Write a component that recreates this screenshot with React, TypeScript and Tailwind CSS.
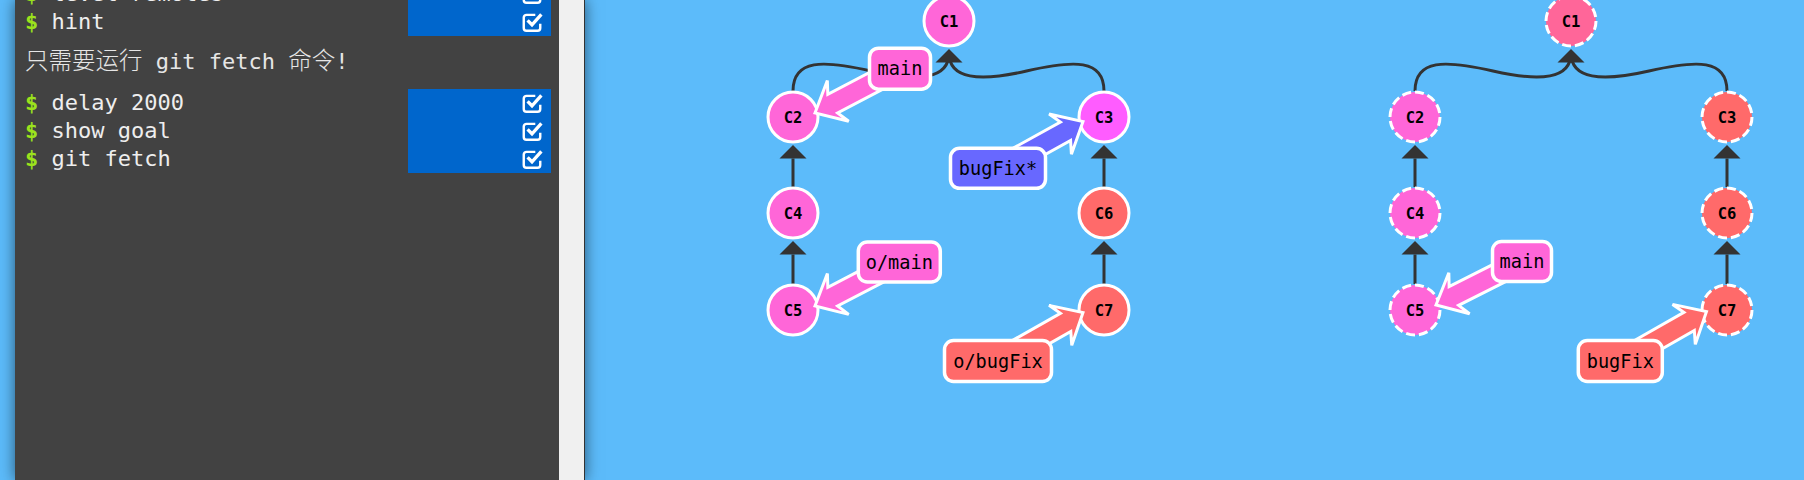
import React from "react";

const MONO = '"DejaVu Sans Mono", "Noto Sans CJK SC", monospace';

const PINK = "#ff66d8";
const MAGENTA = "#ff5cff";
const RED = "#ff6a6a";
const BLUE = "#6868ff";
const GOAL_C1 = "#ff6699";
const EDGE = "#333333";

function CheckIcon() {
  return (
    <svg width="22" height="22" viewBox="0 0 20 20" className="block">
      <path
        d="M13 3.5 H5 a2.5 2.5 0 0 0 -2.5 2.5 V15.5 a2.5 2.5 0 0 0 2.5 2.5 H15 a2.5 2.5 0 0 0 2.5 -2.5 V11.5"
        fill="none"
        stroke="#fff"
        strokeWidth="2.2"
      />
      <path d="M6 8.5 L10 12.5 L18.5 3" fill="none" stroke="#fff" strokeWidth="3" strokeLinejoin="miter" />
    </svg>
  );
}

function Row({ cmd }: { cmd: string }) {
  return (
    <div className="flex h-[28px] items-center">
      <div className="flex-1 whitespace-pre text-[#eeeeee]">
        <span className="font-bold text-[#9be21c]">$</span> {cmd}
      </div>
      <div className="flex h-full w-[143px] items-center justify-end bg-[#0066cc] pr-[8px]">
        <CheckIcon />
      </div>
    </div>
  );
}

type N = { id: string; x: number; y: number; color: string };

function Node({ n, dashed }: { n: N; dashed?: boolean }) {
  return (
    <g>
      <circle
        cx={n.x}
        cy={n.y}
        r={25}
        fill={n.color}
        stroke="#fff"
        strokeWidth={3}
        strokeDasharray={dashed ? "9 4" : undefined}
      />
      <text
        x={n.x}
        y={n.y + 5.5}
        textAnchor="middle"
        fontFamily={MONO}
        fontWeight="bold"
        fontSize={15.5}
        fill="#000"
      >
        {n.id}
      </text>
    </g>
  );
}

function VEdge({ x, childY, parentY }: { x: number; childY: number; parentY: number }) {
  const tip = parentY + 28;
  const base = tip + 13.5;
  return (
    <g>
      <line x1={x} y1={childY - 26} x2={x} y2={base} stroke={EDGE} strokeWidth={3} />
      <polygon points={`${x},${tip} ${x - 13.5},${base} ${x + 13.5},${base}`} fill={EDGE} />
    </g>
  );
}

function TopEdges({ lx, mx, rx, topY, rowY }: { lx: number; mx: number; rx: number; topY: number; rowY: number }) {
  const tip = topY + 28;
  const base = tip + 13.5;
  const sy = rowY - 26;
  const lm = (lx + mx) / 2;
  const rm = (rx + mx) / 2;
  const left = `M${lx} ${sy} C${lx} ${sy - 32}, ${lx + 30} ${sy - 31}, ${lm} ${sy - 20} C${mx - 30} ${sy - 9}, ${mx} ${sy - 12}, ${mx} ${tip + 4}`;
  const right = `M${rx} ${sy} C${rx} ${sy - 32}, ${rx - 30} ${sy - 31}, ${rm} ${sy - 20} C${mx + 30} ${sy - 9}, ${mx} ${sy - 12}, ${mx} ${tip + 4}`;
  return (
    <g>
      <path d={left} fill="none" stroke={EDGE} strokeWidth={3} />
      <path d={right} fill="none" stroke={EDGE} strokeWidth={3} />
      <polygon points={`${mx},${tip} ${mx - 13.5},${base} ${mx + 13.5},${base}`} fill={EDGE} />
    </g>
  );
}

function Branch({
  tx,
  ty,
  angle,
  cx,
  cy,
  w,
  h,
  color,
  label,
}: {
  tx: number;
  ty: number;
  angle: number;
  cx: number;
  cy: number;
  w: number;
  h: number;
  color: string;
  label: string;
}) {
  const L = 80;
  const d = `M0 0 L26 -23 L20 -10.5 L${L} -10.5 L${L} 10.5 L20 10.5 L26 23 Z`;
  return (
    <g>
      <path
        d={d}
        transform={`translate(${tx} ${ty}) rotate(${angle})`}
        fill={color}
        stroke="#fff"
        strokeWidth={3}
        strokeLinejoin="miter"
      />
      <rect x={cx - w / 2} y={cy - h / 2} width={w} height={h} rx={9} fill={color} stroke="#fff" strokeWidth={3.5} />
      <text x={cx} y={cy + 6.5} textAnchor="middle" fontFamily={MONO} fontSize={18.6} fill="#000">
        {label}
      </text>
    </g>
  );
}

export default function App() {
  const Y = [21, 117, 213, 310];
  const A = { l: 793, m: 949, r: 1104 };
  const G = { l: 1415, m: 1571, r: 1727 };

  const actual: N[] = [
    { id: "C1", x: A.m, y: Y[0], color: PINK },
    { id: "C2", x: A.l, y: Y[1], color: PINK },
    { id: "C3", x: A.r, y: Y[1], color: MAGENTA },
    { id: "C4", x: A.l, y: Y[2], color: PINK },
    { id: "C6", x: A.r, y: Y[2], color: RED },
    { id: "C5", x: A.l, y: Y[3], color: PINK },
    { id: "C7", x: A.r, y: Y[3], color: RED },
  ];
  const goal: N[] = [
    { id: "C1", x: G.m, y: Y[0], color: GOAL_C1 },
    { id: "C2", x: G.l, y: Y[1], color: PINK },
    { id: "C3", x: G.r, y: Y[1], color: RED },
    { id: "C4", x: G.l, y: Y[2], color: PINK },
    { id: "C6", x: G.r, y: Y[2], color: RED },
    { id: "C5", x: G.l, y: Y[3], color: PINK },
    { id: "C7", x: G.r, y: Y[3], color: RED },
  ];

  return (
    <div className="flex h-[480px] w-[1804px] overflow-hidden bg-[#5cbbfa]">
      <div className="shrink-0 pl-[15px]">
        <div className="flex h-[480px] w-[570px] shadow-[0_0_14px_rgba(0,0,0,0.55)]">
          <div
            className="w-[544px] overflow-hidden bg-[#424242] pl-[10px] pr-[8px] text-[22px] leading-[28px]"
            style={{ fontFamily: MONO }}
          >
            <div className="-mt-[20px]">
              <Row cmd="level remotes" />
              <Row cmd="hint" />
              <p className="mb-[14px] mt-[11px] h-[28px] whitespace-pre text-[#e6e6e6]">
                <span className="text-[23.5px] font-light">只需要运行</span> git fetch{" "}
                <span className="text-[23.5px] font-light">命令</span>!
              </p>
              <Row cmd="delay 2000" />
              <Row cmd="show goal" />
              <Row cmd="git fetch" />
            </div>
          </div>
          <div className="w-[25px] bg-[#f0f0f0]" />
          <div className="w-px bg-[#333333]" />
        </div>
      </div>
      <svg width={1204} height={480} viewBox="600 0 1204 480" className="ml-[15px] block shrink-0">
        <TopEdges lx={A.l} mx={A.m} rx={A.r} topY={Y[0]} rowY={Y[1]} />
        <VEdge x={A.l} childY={Y[2]} parentY={Y[1]} />
        <VEdge x={A.l} childY={Y[3]} parentY={Y[2]} />
        <VEdge x={A.r} childY={Y[2]} parentY={Y[1]} />
        <VEdge x={A.r} childY={Y[3]} parentY={Y[2]} />
        {actual.map((n) => (
          <Node key={"a" + n.id} n={n} />
        ))}
        <Branch tx={815} ty={113} angle={-27.7} cx={900} cy={68.7} w={61} h={41} color={PINK} label="main" />
        <Branch tx={1083} ty={121.5} angle={151} cx={998} cy={168.3} w={95} h={40} color={BLUE} label="bugFix*" />
        <Branch tx={815} ty={306} angle={-27.6} cx={899.3} cy={262} w={82} h={40} color={PINK} label="o/main" />
        <Branch tx={1083} ty={312.5} angle={150.4} cx={998} cy={361} w={107} h={41} color={RED} label="o/bugFix" />

        <TopEdges lx={G.l} mx={G.m} rx={G.r} topY={Y[0]} rowY={Y[1]} />
        <VEdge x={G.l} childY={Y[2]} parentY={Y[1]} />
        <VEdge x={G.l} childY={Y[3]} parentY={Y[2]} />
        <VEdge x={G.r} childY={Y[2]} parentY={Y[1]} />
        <VEdge x={G.r} childY={Y[3]} parentY={Y[2]} />
        {goal.map((n) => (
          <Node key={"g" + n.id} n={n} dashed />
        ))}
        <Branch tx={1436} ty={305} angle={-26.8} cx={1522} cy={261.5} w={59} h={40} color={PINK} label="main" />
        <Branch tx={1706.5} ty={311.5} angle={150.3} cx={1620.3} cy={361} w={84} h={41} color={RED} label="bugFix" />
      </svg>
    </div>
  );
}
